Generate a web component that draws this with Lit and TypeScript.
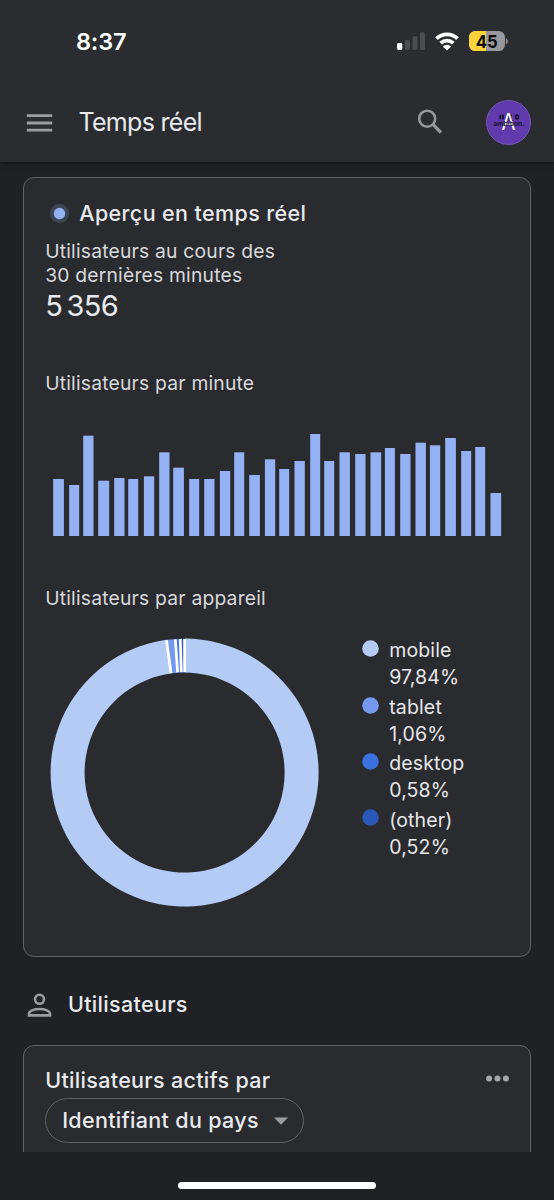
import { LitElement, html, svg, css } from "lit";
import { customElement, property } from "lit/decorators.js";

/** One bar per minute: [left edge, width, height] inside the plot. */
const BARS: [number, number, number][] = [
  [8, 10.7, 57], [24, 10, 51], [38, 10.3, 100.3], [53, 11, 55.3], [69, 10.3, 58],
  [83, 10, 57], [98.7, 10.3, 59.7], [114, 10.3, 83.7], [128, 10.7, 68.3], [144, 10, 57],
  [159, 10.3, 57], [174.7, 10.3, 65], [189, 10, 83.7], [204, 10.7, 61], [219.7, 10.3, 76.7],
  [234, 10, 67], [249.3, 10.3, 75], [265, 10, 102], [279, 10, 75], [294.3, 10.4, 83.7],
  [310, 10.3, 82], [325.3, 10.7, 83.7], [339.7, 10, 88], [355, 10.3, 82], [370.3, 10.4, 93.3],
  [384.7, 10.3, 90.7], [400, 10.7, 98], [416, 10, 85], [430, 10, 89], [445.3, 10.7, 43],
];

interface Slice {
  name: string;
  share: number;
  label: string;
  color: string;
}

const SLICES: Slice[] = [
  { name: "mobile", share: 97.84, label: "97,84%", color: "#b4cbf6" },
  { name: "tablet", share: 1.06, label: "1,06%", color: "#7599ee" },
  { name: "desktop", share: 0.58, label: "0,58%", color: "#3a70e0" },
  { name: "(other)", share: 0.52, label: "0,52%", color: "#2b57b9" },
];

@customElement("minute-chart")
class MinuteChart extends LitElement {
  static styles = css`
    :host { display: block; }
    svg { display: block; }
    rect { fill: #94b2f3; }
  `;
  render() {
    return html`<svg width="464" height="110" viewBox="0.8 0 464 110">
      ${BARS.map(([x, w, h]) => svg`<rect x=${x} y=${110 - h} width=${w} height=${h}></rect>`)}
    </svg>`;
  }
}

@customElement("device-donut")
class DeviceDonut extends LitElement {
  static styles = css`
    :host { display: block; }
    svg { display: block; overflow: visible; }
    .gap { stroke: #fff; stroke-width: 2.8; }
  `;
  private point(turn: number, r: number) {
    const a = turn * 2 * Math.PI;
    return `${(134 + r * Math.sin(a)).toFixed(3)} ${(134 - r * Math.cos(a)).toFixed(3)}`;
  }
  render() {
    let start = 0;
    const parts = SLICES.map((s) => {
      const end = start + s.share / 100;
      const large = s.share > 50 ? 1 : 0;
      const d = `M${this.point(start, 134)}A134 134 0 ${large} 1 ${this.point(end, 134)}L${this.point(end, 100)}A100 100 0 ${large} 0 ${this.point(start, 100)}Z`;
      const gap = `M${this.point(start, 133.6)}L${this.point(start, 100.4)}`;
      start = end;
      return { d, gap, color: s.color };
    });
    return html`<svg width="268" height="268" viewBox="0.4 0.4 268 268">
      ${parts.map((p) => svg`<path d=${p.d} fill=${p.color}></path>`)}
      ${parts.map((p) => svg`<path class="gap" d=${p.gap}></path>`)}
    </svg>`;
  }
}

@customElement("legend-item")
class LegendItem extends LitElement {
  @property() name = "";
  @property() value = "";
  @property() color = "";
  static styles = css`
    :host { display: flex; gap: 10.5px; height: 56.4px; }
    svg { flex: none; display: block; margin-top: 2.8px; }
    .text { font-size: 19.5px; line-height: 27px; letter-spacing: 0.15px; color: #e6e7ea; }
  `;
  render() {
    return html`<svg width="17" height="17" viewBox="0 0 17 17"><circle cx="8.5" cy="8.5" r="8.3" fill=${this.color}></circle></svg>
      <div class="text"><div>${this.name}</div><div>${this.value}</div></div>`;
  }
}

@customElement("app-root")
class AppRoot extends LitElement {
  static styles = css`
    :host {
      display: flex; flex-direction: column; width: 554px; height: 1200px; overflow: hidden;
      background: #202124; color: #e8eaed; font-family: Inter, "Liberation Sans", sans-serif;
    }
    * { box-sizing: border-box; }
    svg { display: block; flex: none; }
    .top { flex: none; height: 162px; background: #2b2c2f; box-shadow: 0 1px 5px rgba(0, 0, 0, 0.5); z-index: 1; }
    .status { display: flex; align-items: center; height: 82px; padding: 0 46px 0 76px; color: #fff; }
    .time { flex: 1; padding-top: 1px; font-size: 23.5px; font-weight: 600; line-height: 30px; letter-spacing: -0.2px; }
    .signals { display: flex; align-items: center; }
    .battery-text { font-size: 18px; font-weight: 700; fill: #0b0b0c; }
    .bar { display: flex; align-items: center; height: 80px; padding: 1px 23px 0 26px; }
    .title { flex: 1; margin: -2px 0 0 25.5px; font-size: 25px; line-height: 30px; letter-spacing: -0.7px; }
    .avatar { margin: 0 0 0 43px; }
    .search { margin-top: -1px; }
    .avatar-small { font-size: 6.6px; font-weight: 700; fill: #17112c; }
    .avatar-letter { font-size: 23px; fill: #fff; }
    .scroll { flex: none; height: 990px; overflow: hidden; padding: 15px 23px 0; }
    .card { border: 1.3px solid #616367; border-radius: 11px; background: #2a2b2e; padding: 0 21.2px; }
    .overview { height: 780px; padding-top: 20px; }
    .heading { display: flex; align-items: center; height: 30px; gap: 9.3px; padding-left: 3.8px; }
    .h { font-size: 21.5px; font-weight: 500; letter-spacing: 0.32px; line-height: 30px; white-space: nowrap; }
    .overview-title { letter-spacing: 0.38px; }
    .label { font-size: 19.3px; line-height: 24px; letter-spacing: 0.2px; color: #d8d9dc; white-space: nowrap; }
    .lead { margin-top: 11px; }
    .count { font-size: 29px; line-height: 36px; margin-top: 1px; letter-spacing: -0.7px; word-spacing: -3px; }
    .per-minute { margin-top: 47px; }
    minute-chart { margin: 31px 0 0 0.8px; }
    .per-device { margin-top: 50px; }
    .devices { display: flex; margin-top: 28.5px; padding-left: 5.8px; }
    .legend { margin-left: 42.7px; margin-top: -1.1px; }
    .section { display: flex; align-items: center; height: 88px; padding: 8px 0 0 4px; gap: 16px; }
    .section-title { margin-top: -2px; }
    .active { height: 140px; padding-top: 19px; }
    .active-head { display: flex; justify-content: space-between; align-items: center; height: 30px; }
    .dots { margin-top: -4px; }
    .pill {
      display: flex; align-items: center; justify-content: space-between; width: 258.5px; height: 45px;
      margin-top: 3px; padding: 0 15px 1.5px 16px; border: 1.3px solid #616367; border-radius: 23px;
    }
    .arrow { margin-top: 2px; }
    .home { flex: 1; display: flex; justify-content: center; padding-top: 29.5px; }
    .home-bar { width: 198px; height: 7.5px; border-radius: 4px; background: #fff; }
  `;

  render() {
    return html`
      <header class="top">
        <div class="status">
          <div class="time">8:37</div>
          <div class="signals">
            <svg width="111" height="24" viewBox="397 29 111 24">
              <rect x="397" y="43" width="5.3" height="7" rx="1.4" fill="#fff"></rect>
              <rect x="405" y="40" width="5" height="10" rx="1.4" fill="#4c4d50"></rect>
              <rect x="412.5" y="36.2" width="5" height="13.8" rx="1.4" fill="#4c4d50"></rect>
              <rect x="420" y="32.2" width="5" height="17.8" rx="1.4" fill="#4c4d50"></rect>
              <g fill="none" stroke="#fff" stroke-width="3.9">
                <path d="M436.5 38.6a15.2 15.2 0 0 1 21 0"></path>
                <path d="M440.7 43.1a9.2 9.2 0 0 1 12.6 0"></path>
              </g>
              <path d="M442.8 46.4a6 6 0 0 1 8.4 0L447 50.4Z" fill="#fff"></path>
              <clipPath id="level"><rect x="469" y="30" width="17" height="22"></rect></clipPath>
              <rect x="469" y="31" width="36" height="20" rx="6.3" fill="#98989c"></rect>
              <rect x="469" y="31" width="36" height="20" rx="6.3" fill="#fbd43a" clip-path="url(#level)"></rect>
              <path d="M506 38.3c2.4.8 2.4 5 0 5.8Z" fill="#98989c"></path>
              <text class="battery-text" x="486.7" y="47.6" text-anchor="middle" textLength="22" lengthAdjust="spacingAndGlyphs">45</text>
            </svg>
          </div>
        </div>
        <div class="bar">
          <svg width="27" height="18" viewBox="0 0 27 18"><path d="M.8 1.7h25.4M.8 9h25.4M.8 16.2h25.4" stroke="#9b9ca1" stroke-width="2.8"></path></svg>
          <div class="title">Temps réel</div>
          <svg class="search" width="26" height="26" viewBox="0 0 26 26" fill="none" stroke="#96979b"><circle cx="10.2" cy="9.7" r="8" stroke-width="2.6"></circle><path d="m16.2 15.6 7.8 8" stroke-width="3.4"></path></svg>
          <svg class="avatar" width="45" height="46" viewBox="0 0.5 45 46">
            <circle cx="22.5" cy="23" r="22" fill="#603bae" stroke="#7356b4" stroke-width="1"></circle>
            <path d="M14.3 15.2v4.6M17 15.2v4.6M23 15.2v4.6M23 16.2h3M23 19h3" stroke="#17112c" stroke-width="1.8"></path>
            <ellipse cx="31" cy="17.5" rx="1.5" ry="2" fill="none" stroke="#17112c" stroke-width="1.6"></ellipse>
            <text class="avatar-letter" x="22.5" y="30.9" text-anchor="middle" textLength="14" lengthAdjust="spacingAndGlyphs">A</text>
            <text class="avatar-small" x="7.5" y="26.8" textLength="31">ambition.</text>
          </svg>
        </div>
      </header>
      <main class="scroll">
        <section class="card overview">
          <div class="heading">
            <svg width="21" height="21" viewBox="0 0 21 21"><circle cx="10.5" cy="10.5" r="9.7" fill="#3c4553"></circle><circle cx="10.5" cy="10.5" r="5.7" fill="#94b2f3"></circle></svg>
            <div class="h overview-title">Aperçu en temps réel</div>
          </div>
          <div class="label lead">Utilisateurs au cours des<br />30 dernières minutes</div>
          <div class="count">5 356</div>
          <div class="label per-minute">Utilisateurs par minute</div>
          <minute-chart></minute-chart>
          <div class="label per-device">Utilisateurs par appareil</div>
          <div class="devices">
            <device-donut></device-donut>
            <div class="legend">
              ${SLICES.map((s) => html`<legend-item .name=${s.name} .value=${s.label} .color=${s.color}></legend-item>`)}
            </div>
          </div>
        </section>
        <div class="section">
          <svg width="25" height="25" viewBox="0 0 25 25" fill="none" stroke="#9b9ca1" stroke-width="2.6"><circle cx="12.5" cy="6.3" r="4.5"></circle><path d="M2 22.4v-1.6c0-2.8 4.9-4.8 10.5-4.8S23 18 23 20.8v1.6Z"></path></svg>
          <div class="h section-title">Utilisateurs</div>
        </div>
        <section class="card active">
          <div class="active-head">
            <div class="h">Utilisateurs actifs par</div>
            <svg class="dots" width="23" height="7" viewBox="0 0 23 7" fill="#a4a5aa"><circle cx="3.1" cy="3.5" r="3"></circle><circle cx="11.5" cy="3.5" r="3"></circle><circle cx="19.9" cy="3.5" r="3"></circle></svg>
          </div>
          <div class="pill">
            <div class="h">Identifiant du pays</div>
            <svg class="arrow" width="14" height="8" viewBox="0 0 14 8"><path d="M0 .5h14L7 7.7Z" fill="#9b9ca1"></path></svg>
          </div>
        </section>
      </main>
      <footer class="home"><div class="home-bar"></div></footer>
    `;
  }
}
